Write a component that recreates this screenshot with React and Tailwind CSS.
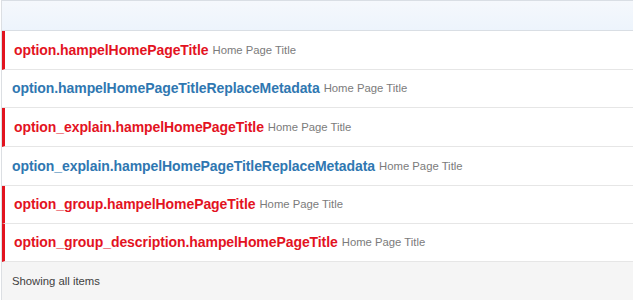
export default function App() {
  const rows = [
    { t: "option.hampelHomePageTitle", red: true, h: "h-[39px]" },
    { t: "option.hampelHomePageTitleReplaceMetadata", red: false, h: "h-[38px]" },
    { t: "option_explain.hampelHomePageTitle", red: true, h: "h-[39px]" },
    { t: "option_explain.hampelHomePageTitleReplaceMetadata", red: false, h: "h-[39px]" },
    { t: "option_group.hampelHomePageTitle", red: true, h: "h-[38px]" },
    { t: "option_group_description.hampelHomePageTitle", red: true, h: "h-[38px]" },
  ];
  return (
    <div className="w-[633px] h-[300px] bg-white overflow-hidden" style={{ fontFamily: '"Liberation Sans", Arial, sans-serif' }}>
      <div className="ml-[1px] border-l border-[#dcdfe3] h-full flex flex-col">
        <div className="h-[31px] shrink-0 border-t border-b border-[#d9dee4] bg-gradient-to-b from-[#f5f8fc] to-[#edf4fc]" />
        {rows.map((r, i) => (
          <div key={i} className={`${r.h} shrink-0 flex items-center border-b border-[#e6e6e6] bg-white ${r.red ? "border-l-[3px] border-l-[#e2141f] pl-[9px]" : "pl-[10px]"}`}>
            <span className={`text-[14px] font-bold tracking-[-0.08px] ${r.red ? "text-[#e3131f]" : "text-[#2f77b1]"}`}>{r.t}</span>
            <span className="text-[11.3px] text-[#7b7b7b] ml-[4px]">Home Page Title</span>
          </div>
        ))}
        <div className="flex-1 bg-[#f5f5f5] flex items-center pl-[10px]">
          <span className="text-[11.3px] text-[#3f3f3f]">Showing all items</span>
        </div>
      </div>
    </div>
  );
}
